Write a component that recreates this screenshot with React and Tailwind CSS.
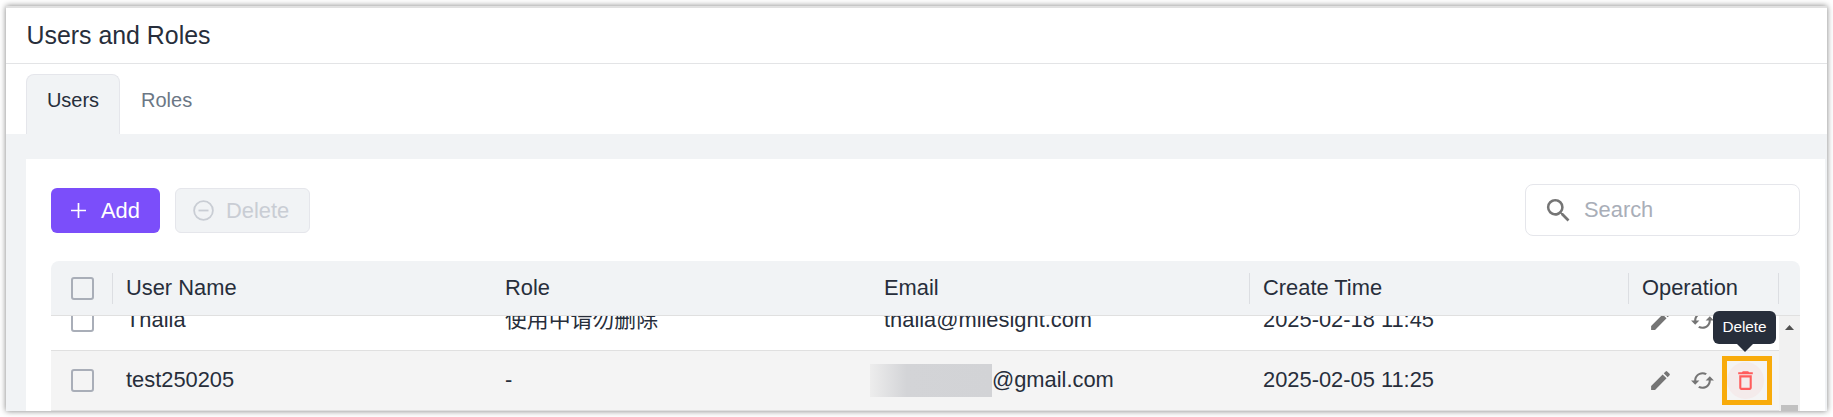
import React from 'react';
import { MdSearch, MdEdit, MdCached, MdDeleteOutline } from 'react-icons/md';

const columns = 'grid grid-cols-[61px_379px_379px_379px_379px_151px] items-center';

function Checkbox() {
  return <span className="ml-5 block h-[23px] w-[23px] rounded-[3px] border-2 border-[#a9aeb8]" />;
}

function HeadCell({ children, divider, last }) {
  return (
    <div
      className={`h-[31px] border-l pl-[13px] leading-[29px] ${divider ? 'border-l-[#dcdee2]' : 'border-l-transparent'} ${
        last ? 'border-r border-r-[#dcdee2]' : ''
      }`}
    >
      {children}
    </div>
  );
}

function Row({ name, role, email, time, hovered }) {
  return (
    <div className={`${columns} h-[60px] shrink-0 border-b border-[#e0e0e0] whitespace-nowrap ${hovered ? 'bg-[#f4f4f4]' : 'bg-white'}`}>
      <Checkbox />
      <div className="pl-[14px]">{name}</div>
      <div className="pl-[14px]">{role}</div>
      <div className="pl-[14px]">{email}</div>
      <div className="pl-[14px]">{time}</div>
      <div className="flex items-center pl-5 text-[#757575]">
        <MdEdit className="h-[25px] w-[25px] shrink-0" />
        <MdCached className="ml-[17px] h-[25px] w-[25px] shrink-0" />
        {hovered && (
          <span className="relative ml-3 flex h-[37px] w-[37px] shrink-0 items-center justify-center rounded-full bg-[#f4ebeb] text-[#ff5c5c]">
            <MdDeleteOutline className="h-[25px] w-[25px]" />
            <span className="absolute -top-1.5 -left-[5px] h-[49px] w-[50px] border-[5px] border-[#f8ab0b]" />
          </span>
        )}
      </div>
    </div>
  );
}

function MaskedEmail() {
  return (
    <div className="-ml-[14px] flex items-center">
      <span className="h-[33px] w-[122px] bg-linear-to-r from-[#ededed] via-[#d3d4d7] via-30% to-[#d2d3d6]" />
      @gmail.com
    </div>
  );
}

export default function App() {
  return (
    <div className="h-[417px] w-[1833px] overflow-hidden bg-white px-1.5 pt-1.5 font-['Liberation_Sans','Noto_Sans_CJK_SC',sans-serif] text-[21.875px] text-[#272e3b]">
      <main className="flex h-[405px] w-[1821px] flex-col border-t-2 border-[#e1e1e1] bg-white shadow-[0_0_6px_rgba(0,0,0,0.5)]">
        <header className="flex h-14 shrink-0 items-center border-b border-[#e3e4e6] pl-[20.5px] text-[24.9px]">Users and Roles</header>
        <nav className="flex h-[70px] shrink-0 items-end pl-5 text-[20px]">
          <div className="flex h-[60px] w-[94px] justify-center rounded-t-lg border border-b-0 border-[#e5e6eb] bg-[#f1f3f5] pt-2.5">Users</div>
          <div className="h-[60px] pl-[21px] pt-[11px] text-[#6b7785]">Roles</div>
        </nav>
        <div className="h-[277px] bg-[#f1f3f5] pl-5 pr-0.5 pt-[25px]">
          <section className="h-[252px] bg-white px-[25px] pt-[25px]">
            <div className="flex h-[52px] items-center justify-between">
              <div className="flex gap-[15px]">
                <button className="flex h-[45px] w-[109px] items-center rounded-md bg-[#7b4efa] pl-5 leading-[33px] text-white">
                  <svg className="mr-[15px] h-[15px] w-[15px]" viewBox="0 0 15 15" stroke="currentColor" strokeWidth="1.7">
                    <path d="M7.5 0v15M0 7.5h15" />
                  </svg>
                  Add
                </button>
                <button className="flex h-[45px] w-[135px] items-center rounded-md border border-[#e5e6eb] bg-[#f1f3f5] pl-[17px] leading-[33px] text-[#c9cdd4]">
                  <svg className="mr-3 h-[21px] w-[21px]" viewBox="0 0 21 21" fill="none" stroke="currentColor" strokeWidth="1.8">
                    <circle cx="10.5" cy="10.5" r="9.4" />
                    <path d="M5.5 10.5h10" />
                  </svg>
                  Delete
                </button>
              </div>
              <div className="flex h-[52px] w-[275px] items-center rounded-lg border border-[#e5e6eb] pl-[17px] leading-[32px] text-[#a9aeb8]">
                <MdSearch className="mr-2.5 h-[31px] w-[31px] text-[#757575]" />
                Search
              </div>
            </div>
            <div className="relative mt-[25px] w-[1749px]">
              <div className={`${columns} h-[55px] rounded-t-lg border-b border-[#e0e0e0] bg-[#f1f3f5]`}>
                <Checkbox />
                <HeadCell divider>User Name</HeadCell>
                <HeadCell>Role</HeadCell>
                <HeadCell>Email</HeadCell>
                <HeadCell divider>Create Time</HeadCell>
                <HeadCell divider last>Operation</HeadCell>
              </div>
              <div className="flex h-[95px] overflow-hidden">
                <div className="flex w-[1728px] flex-col justify-end">
                  <Row name="Thalia" role="使用中请勿删除" email="thalia@milesight.com" time="2025-02-18 11:45" />
                  <Row name="test250205" role="-" email={<MaskedEmail />} time="2025-02-05 11:25" hovered />
                </div>
                <div className="flex w-[21px] flex-col items-center justify-between bg-[#f1f1f1] pt-[9px]">
                  <svg className="h-[5px] w-[9px]" viewBox="0 0 9 5" fill="#505050">
                    <path d="M4.5 0L9 5H0z" />
                  </svg>
                  <span className="h-1.5 w-[17px] bg-[#c1c1c1]" />
                </div>
              </div>
              <div className="absolute top-[50px] left-[1662px] flex h-[33px] w-[63px] items-center justify-center rounded-md bg-[#272e3b] pb-px text-[15.3px] text-white">
                Delete
                <svg className="absolute top-[33px] left-6 h-2 w-4" viewBox="0 0 16 8" fill="#272e3b">
                  <path d="M0 0h16L8 8z" />
                </svg>
              </div>
            </div>
          </section>
        </div>
      </main>
    </div>
  );
}
